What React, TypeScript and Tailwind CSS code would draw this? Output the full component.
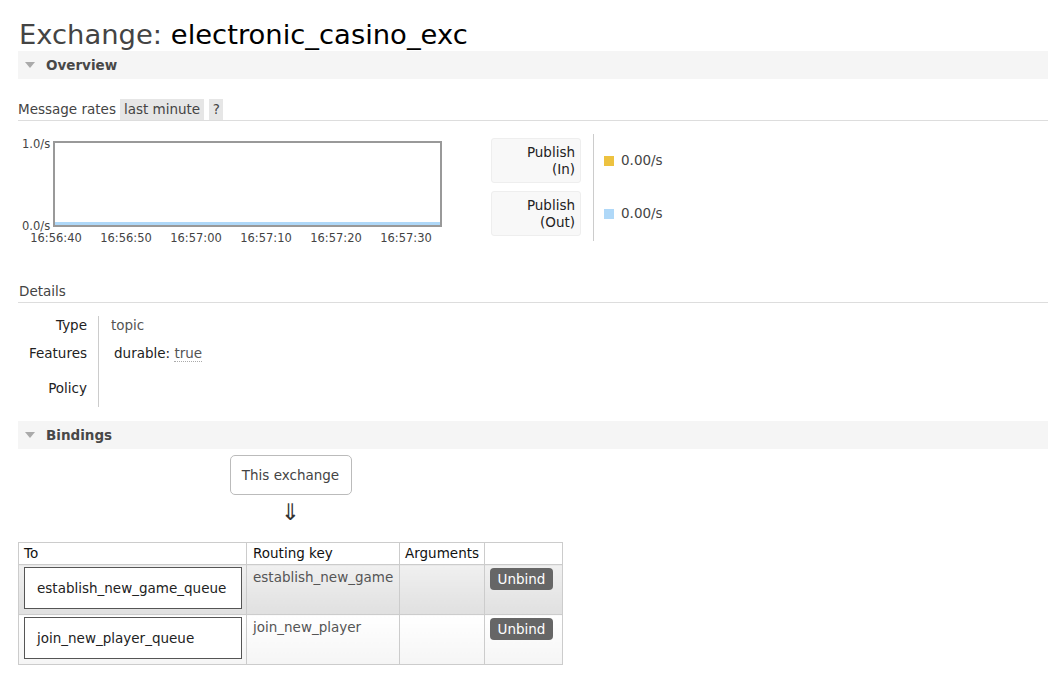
const timeLabels = [
  { t: "16:56:40", cls: "left-[38px]" },
  { t: "16:56:50", cls: "left-[108px]" },
  { t: "16:57:00", cls: "left-[178px]" },
  { t: "16:57:10", cls: "left-[248px]" },
  { t: "16:57:20", cls: "left-[318px]" },
  { t: "16:57:30", cls: "left-[388px]" },
];

const bindings = [
  { to: "establish_new_game_queue", key: "establish_new_game", odd: true },
  { to: "join_new_player_queue", key: "join_new_player", odd: false },
];

function SectionBar({ title }: { title: string }) {
  return (
    <div className="flex h-[28px] items-center bg-[#f5f5f5]">
      <span className="ml-[7px] h-0 w-0 border-x-[5.5px] border-t-[6px] border-x-transparent border-t-[#aaa]" />
      <span className="ml-[11px] font-bold text-[#484848]">{title}</span>
    </div>
  );
}

function RateChart() {
  return (
    <div className="relative h-[113px] w-[430px] shrink-0 text-[11.5px] leading-[13px] text-[#444]">
      <span className="absolute left-[4px] top-[4px]">1.0/s</span>
      <div className="absolute left-[35px] top-[7px] h-[86px] w-[389px] border-2 border-[#999] bg-white">
        <div className="absolute inset-x-0 bottom-0 h-[3px] bg-[#afd8f8]" />
      </div>
      <span className="absolute left-[4px] top-[86px]">0.0/s</span>
      {timeLabels.map((l) => (
        <span key={l.t} className={`absolute top-[98px] -translate-x-1/2 ${l.cls}`}>
          {l.t}
        </span>
      ))}
    </div>
  );
}

function RateLegend() {
  const items = [
    { label: ["Publish", "(In)"], color: "bg-[#edc240]" },
    { label: ["Publish", "(Out)"], color: "bg-[#afd8f8]" },
  ];
  return (
    <div className="ml-[43px] flex h-[107px]">
      <div className="flex flex-col gap-[8px] border-r border-[#ccc] pr-[12px] pt-[4px]">
        {items.map((it) => (
          <div
            key={it.label[1]}
            className="h-[45px] w-[90px] rounded-[3px] border border-[#eee] bg-[#f8f8f8] pr-[5px] pt-[5px] text-right leading-[17px] text-[#222]"
          >
            <div>{it.label[0]}</div>
            <div>{it.label[1]}</div>
          </div>
        ))}
      </div>
      <div className="flex flex-col gap-[8px] pl-[10px] pt-[4px]">
        {items.map((it) => (
          <div key={it.label[1]} className="flex h-[45px] items-center">
            <span className={`mr-[7px] h-[10px] w-[10px] ${it.color}`} />
            <span className="text-[#444]">0.00/s</span>
          </div>
        ))}
      </div>
    </div>
  );
}

export default function App() {
  return (
    <div className="min-h-[690px] bg-white pl-[18px] font-['DejaVu_Sans',sans-serif] text-[13.5px] text-[#444]">
      <h1 className="h-[51px] pl-[1px] pt-[19px] text-[27.4px] font-normal leading-[32px]">
        <span className="text-[#444]">Exchange: </span>
        <span className="text-black">electronic_casino_exc</span>
      </h1>

      <SectionBar title="Overview" />

      <div className="mt-[20px] flex h-[22px] items-stretch border-b border-[#ddd] leading-[21px]">
        <span>Message rates</span>
        <span className="ml-[4px] h-[21px] bg-[#e6e6e6] px-[4px]">last minute</span>
        <span className="ml-[5px] h-[21px] bg-[#e6e6e6] px-[3.5px]">?</span>
      </div>

      <div className="mt-[13px] flex h-[113px] items-start">
        <RateChart />
        <RateLegend />
      </div>

      <div className="mt-[34px] h-[22px] border-b border-[#ddd] pl-[1px] leading-[21px]">Details</div>

      <div className="mt-[13px] flex flex-col leading-[18px]">
        <div className="flex h-[22px]">
          <div className="w-[81px] border-r border-[#ccc] pr-[11px] text-right text-[#222]">Type</div>
          <div className="pl-[12px] text-[#555]">topic</div>
        </div>
        <div className="flex h-[30px]">
          <div className="w-[81px] border-r border-[#ccc] pr-[11px] pt-[6px] text-right text-[#222]">Features</div>
          <div className="pl-[15px] pt-[6px]">
            <span className="text-[#222]">durable: </span>
            <span className="border-b border-dotted border-[#aaa] text-[#555]">true</span>
          </div>
        </div>
        <div className="flex h-[39px]">
          <div className="w-[81px] border-r border-[#ccc] pr-[11px] pt-[11px] text-right text-[#222]">Policy</div>
          <div className="pl-[12px]" />
        </div>
      </div>

      <div className="mt-[14px]">
        <SectionBar title="Bindings" />
      </div>

      <div className="flex w-[545px] flex-col items-center">
        <div className="mt-[6px] flex h-[40px] w-[122px] items-center justify-center rounded-[5px] border border-[#bbb] text-[#444]">
          This exchange
        </div>
        <div className="mt-[5px] h-[24px] text-[23px] leading-[24px] text-[#333]">⇓</div>
      </div>

      <table className="mt-[18px] w-[545px] table-fixed border-collapse text-left">
        <colgroup>
          <col className="w-[228px]" />
          <col className="w-[153px]" />
          <col className="w-[85px]" />
          <col className="w-[78px]" />
        </colgroup>
        <thead>
          <tr className="h-[22px] text-[#111]">
            <th className="border border-[#ccc] px-[5px] font-normal">To</th>
            <th className="border border-[#ccc] px-[6px] font-normal">Routing key</th>
            <th className="border border-[#ccc] px-[5px] font-normal">Arguments</th>
            <th className="border border-[#ccc] px-[5px] font-normal" />
          </tr>
        </thead>
        <tbody>
          {bindings.map((b) => {
            const bg = b.odd
              ? "bg-linear-to-b from-[#f0f0f0] to-[#e0e0e0]"
              : "bg-linear-to-b from-white to-[#f5f5f5]";
            return (
              <tr key={b.to} className="h-[50px]">
                <td className={`border border-[#ccc] px-[5px] py-[2px] align-top ${bg}`}>
                  <div className="flex h-[42px] w-[218px] items-center border border-[#555] bg-white pl-[12px] text-[#222]">
                    {b.to}
                  </div>
                </td>
                <td className={`border border-[#ccc] px-[6px] pt-[3px] align-top leading-[18px] text-[#555] ${bg}`}>
                  {b.key}
                </td>
                <td className={`border border-[#ccc] align-top ${bg}`} />
                <td className={`border border-[#ccc] pl-[5px] pt-[3px] align-top ${bg}`}>
                  <span className="inline-flex h-[22px] w-[63px] items-center justify-center rounded-[4px] bg-[#666] text-white">
                    Unbind
                  </span>
                </td>
              </tr>
            );
          })}
        </tbody>
      </table>
    </div>
  );
}
